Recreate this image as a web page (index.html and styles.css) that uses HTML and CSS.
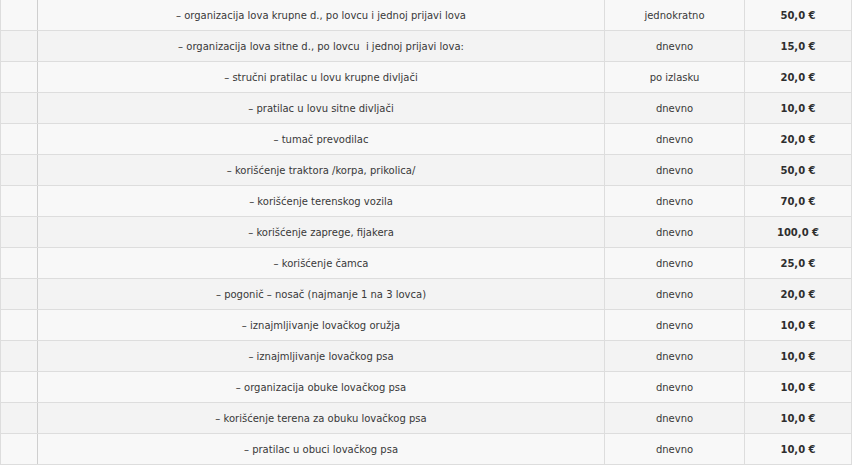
FILE: index.html
```html
<!DOCTYPE html>
<html>
<head>
<meta charset="utf-8">
<link rel="stylesheet" href="styles.css">
</head>
<body>
<table class="prices">
<tbody>
<tr><td class="c1"></td><td class="c2">– organizacija lova krupne d., po lovcu i jednoj prijavi lova</td><td class="c3">jednokratno</td><td class="c4">50,0 €</td></tr>
<tr><td class="c1"></td><td class="c2">– organizacija lova sitne d., po lovcu &nbsp;i jednoj prijavi lova:</td><td class="c3">dnevno</td><td class="c4">15,0 €</td></tr>
<tr><td class="c1"></td><td class="c2">– stručni pratilac u lovu krupne divljači</td><td class="c3">po izlasku</td><td class="c4">20,0 €</td></tr>
<tr><td class="c1"></td><td class="c2">– pratilac u lovu sitne divljači</td><td class="c3">dnevno</td><td class="c4">10,0 €</td></tr>
<tr><td class="c1"></td><td class="c2">– tumač prevodilac</td><td class="c3">dnevno</td><td class="c4">20,0 €</td></tr>
<tr><td class="c1"></td><td class="c2">– korišćenje traktora /korpa, prikolica/</td><td class="c3">dnevno</td><td class="c4">50,0 €</td></tr>
<tr><td class="c1"></td><td class="c2">– korišćenje terenskog vozila</td><td class="c3">dnevno</td><td class="c4">70,0 €</td></tr>
<tr><td class="c1"></td><td class="c2">– korišćenje zaprege, fijakera</td><td class="c3">dnevno</td><td class="c4">100,0 €</td></tr>
<tr><td class="c1"></td><td class="c2">– korišćenje čamca</td><td class="c3">dnevno</td><td class="c4">25,0 €</td></tr>
<tr><td class="c1"></td><td class="c2">– pogonič – nosač (najmanje 1 na 3 lovca)</td><td class="c3">dnevno</td><td class="c4">20,0 €</td></tr>
<tr><td class="c1"></td><td class="c2">– iznajmljivanje lovačkog oružja</td><td class="c3">dnevno</td><td class="c4">10,0 €</td></tr>
<tr><td class="c1"></td><td class="c2">– iznajmljivanje lovačkog psa</td><td class="c3">dnevno</td><td class="c4">10,0 €</td></tr>
<tr><td class="c1"></td><td class="c2">– organizacija obuke lovačkog psa</td><td class="c3">dnevno</td><td class="c4">10,0 €</td></tr>
<tr><td class="c1"></td><td class="c2">– korišćenje terena za obuku lovačkog psa</td><td class="c3">dnevno</td><td class="c4">10,0 €</td></tr>
<tr><td class="c1"></td><td class="c2">– pratilac u obuci lovačkog psa</td><td class="c3">dnevno</td><td class="c4">10,0 €</td></tr>
</tbody>
</table>
</body>
</html>
```
FILE: styles.css
```css
html, body {
  margin: 0;
  padding: 0;
  background: #ffffff;
}
body {
  font-family: "DejaVu Sans", Verdana, sans-serif;
  font-size: 10px;
  color: #383838;
}
.prices {
  border-collapse: collapse;
  table-layout: fixed;
  width: 852px;
  margin-top: -1px;
}
.prices td {
  border: 1px solid #dddddd;
  height: 31px;
  padding: 0 4px;
  box-sizing: border-box;
  text-align: center;
  vertical-align: middle;
}
.prices tr:nth-child(odd) td { background: #f8f8f8; }
.prices tr:nth-child(even) td { background: #f3f3f3; }
.prices .c1 { width: 37px; border-right-color: #cfcfcf; }
.prices .c2 { width: 567px; }
.prices .c3 { width: 140px; }
.prices .c4 { width: 107px; font-weight: bold; color: #2e2e2e; }
```
